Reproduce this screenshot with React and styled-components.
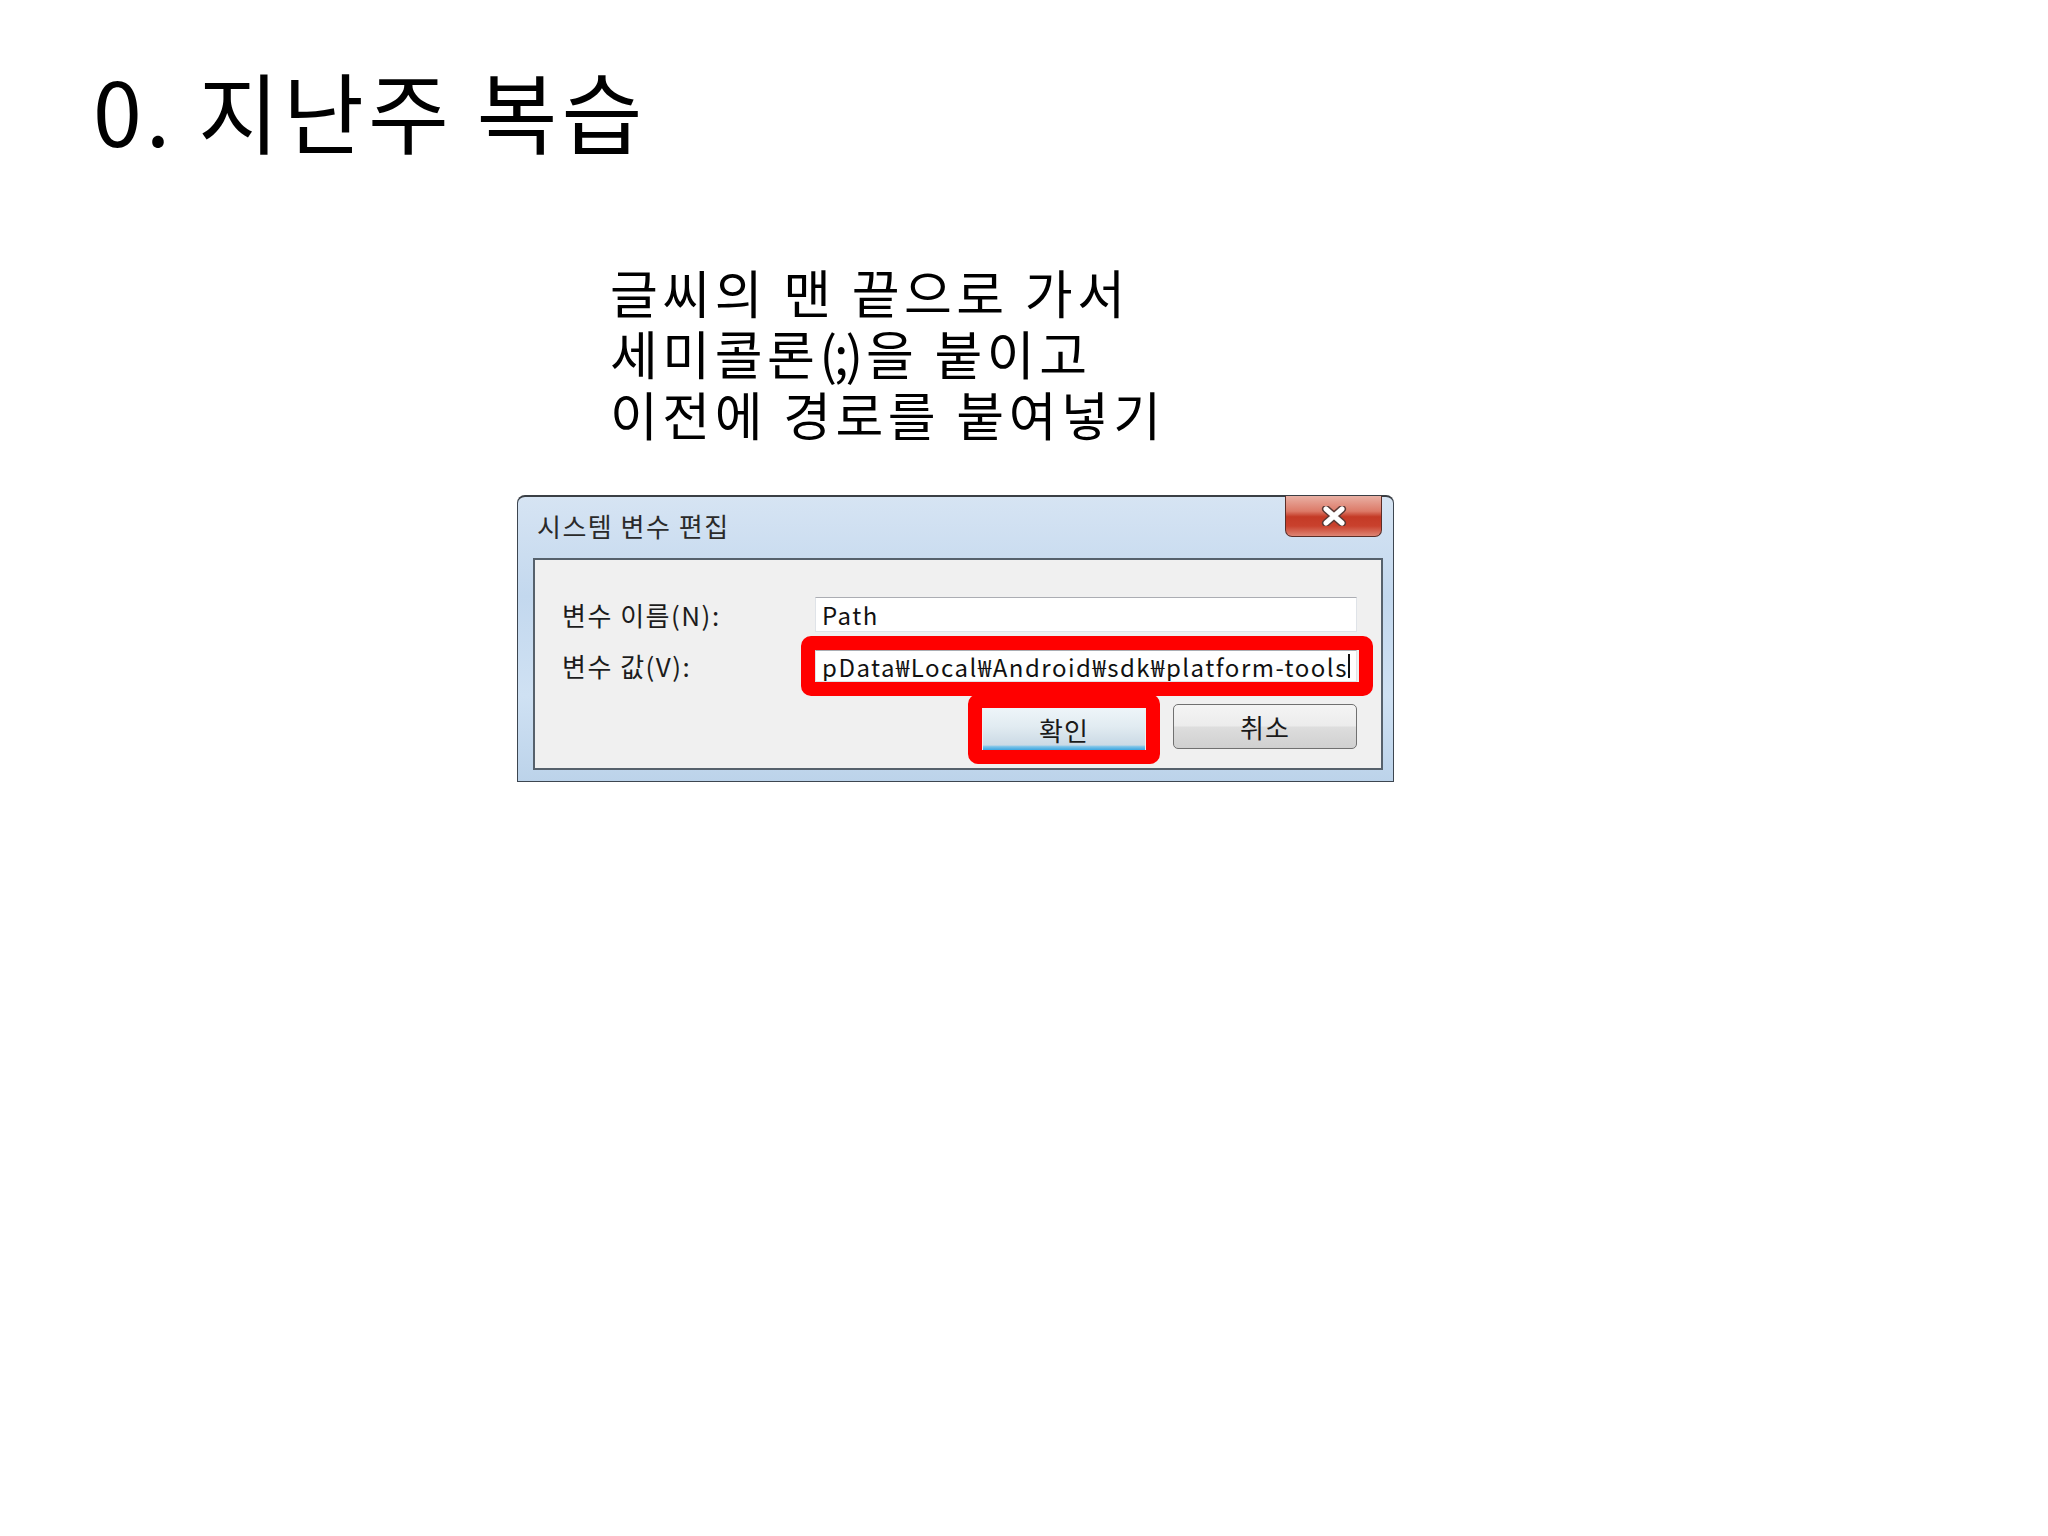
import React from "react";
import styled, { createGlobalStyle } from "styled-components";

const GlobalStyle = createGlobalStyle`
  html, body {
    margin: 0;
    padding: 0;
    background: #fff;
  }
  body {
    font-family: "Noto Sans CJK KR", "Noto Sans", sans-serif;
    color: #000;
  }
`;

const Slide = styled.div`
  width: 2048px;
  height: 1536px;
  background: #fff;
  overflow: hidden;
  display: flex;
  flex-direction: column;
  align-items: flex-start;
`;

const Title = styled.h1`
  margin: 65px 0 0 93px;
  font-size: 88px;
  font-weight: 400;
  line-height: 88px;
  letter-spacing: 4px;
  white-space: nowrap;
`;

const Note = styled.p`
  margin: 108px 0 0 610px;
  font-size: 52px;
  line-height: 61px;
  letter-spacing: 4.5px;
`;

const NoteLine = styled.span`
  display: block;
  white-space: nowrap;
`;

const Paren = styled.span`
  letter-spacing: -3px;
  margin-right: 6px;
`;

const Dialog = styled.div`
  position: relative;
  margin: 51px 0 0 517px;
  width: 877px;
  height: 287px;
  box-sizing: border-box;
  border: 1px solid #3d4650;
  border-top: 2px solid #3a3f45;
  border-radius: 8px 8px 0 0;
  background: linear-gradient(
    180deg,
    #d6e4f3 0%,
    #c3d8ee 35%,
    #cfe1f3 70%,
    #bcd3ea 100%
  );
  display: flex;
  flex-direction: column;
  font-family: "Noto Sans CJK KR", sans-serif;
  color: #1c1c1c;
`;

const TitleBar = styled.div`
  height: 61px;
  flex: none;
  display: flex;
  justify-content: space-between;
  align-items: flex-start;
`;

const TitleText = styled.div`
  padding: 14px 0 0 19px;
  font-size: 26px;
  line-height: 30px;
  color: #2a2a2a;
  letter-spacing: 1.5px;
`;

const CloseButton = styled.div`
  width: 97px;
  height: 41px;
  margin: -1px 11px 0 0;
  box-sizing: border-box;
  border: 1px solid #5b2e28;
  border-top: none;
  border-radius: 0 0 7px 7px;
  background: linear-gradient(
    180deg,
    #e9b0a4 0%,
    #dc7a68 38%,
    #c43a26 52%,
    #c9412d 75%,
    #de8574 100%
  );
  display: flex;
  align-items: center;
  justify-content: center;
`;

const Panel = styled.div`
  flex: 1;
  margin: 0 10px 11px 15px;
  box-sizing: border-box;
  border: 2px solid #56616c;
  background: #f0f0f0;
  padding: 37px 24px 0 27px;
  display: flex;
  flex-direction: column;
`;

const Form = styled.div`
  display: grid;
  grid-template-columns: 253px 1fr;
  row-gap: 18px;
  align-items: center;
`;

const Label = styled.div`
  font-size: 26px;
  line-height: 30px;
  letter-spacing: 1.5px;
  white-space: nowrap;
`;

const Field = styled.div`
  height: ${(p) => p.$h}px;
  box-sizing: border-box;
  background: #fff;
  border: 1px solid #dfe3e8;
  border-top-color: #abadb3;
  padding-left: 6px;
  display: flex;
  align-items: center;
  font-size: 24px;
  letter-spacing: 1.5px;
  color: #111;
  white-space: nowrap;
  overflow: hidden;
`;

const Caret = styled.span`
  display: inline-block;
  width: 2px;
  height: 24px;
  background: #111;
`;

const Buttons = styled.div`
  margin-top: 22px;
  display: flex;
  justify-content: flex-end;
  align-items: flex-start;
  gap: 28px;
`;

const Button = styled.div`
  width: ${(p) => p.$w}px;
  height: ${(p) => p.$h}px;
  margin-top: ${(p) => (p.$default ? 4 : 0)}px;
  box-sizing: border-box;
  display: flex;
  align-items: center;
  justify-content: center;
  font-size: 26px;
  letter-spacing: 1px;
  color: #1a1a1a;
  border-radius: ${(p) => (p.$default ? 0 : 5)}px;
  border: ${(p) => (p.$default ? "none" : "1px solid #707070")};
  background: ${(p) =>
    p.$default
      ? "linear-gradient(180deg, #eef5f9 0%, #e1ebf1 45%, #cbdae5 88%, #7cc3e8 92%, #3aa6e0 100%)"
      : "linear-gradient(180deg, #f4f4f4 0%, #ececec 48%, #dddddd 52%, #d0d0d0 100%)"};
`;

// red markers drawn over the screenshot
const Highlight = styled.div`
  position: absolute;
  left: ${(p) => p.$x}px;
  top: ${(p) => p.$y}px;
  width: ${(p) => p.$w}px;
  height: ${(p) => p.$h}px;
  box-sizing: border-box;
  border: 14px solid #ff0000;
  border-radius: 10px;
  pointer-events: none;
`;

const CloseIcon = () => (
  <svg width="26" height="20" viewBox="0 0 26 20">
    <path d="M5 3 L21 17 M21 3 L5 17" stroke="#5a3a36" strokeWidth="8" strokeLinecap="round" />
    <path d="M5 3 L21 17 M21 3 L5 17" stroke="#ffffff" strokeWidth="5" strokeLinecap="round" />
  </svg>
);

export default function App() {
  return (
    <Slide>
      <GlobalStyle />
      <Title>0. 지난주 복습</Title>
      <Note>
        <NoteLine>글씨의 맨 끝으로 가서</NoteLine>
        <NoteLine>
          세미콜론<Paren>(;)</Paren>을 붙이고
        </NoteLine>
        <NoteLine>이전에 경로를 붙여넣기</NoteLine>
      </Note>
      <Dialog>
        <TitleBar>
          <TitleText>시스템 변수 편집</TitleText>
          <CloseButton>
            <CloseIcon />
          </CloseButton>
        </TitleBar>
        <Panel>
          <Form>
            <Label>변수 이름(N):</Label>
            <Field $h={35}>Path</Field>
            <Label>변수 값(V):</Label>
            <Field $h={32}>
              pData₩Local₩Android₩sdk₩platform-tools
              <Caret />
            </Field>
          </Form>
          <Buttons>
            <Button $default $w={162} $h={42}>확인</Button>
            <Button $w={184} $h={45}>취소</Button>
          </Buttons>
        </Panel>
        <Highlight $x={283} $y={139} $w={572} $h={60} />
        <Highlight $x={450} $y={197} $w={192} $h={70} />
      </Dialog>
    </Slide>
  );
}
